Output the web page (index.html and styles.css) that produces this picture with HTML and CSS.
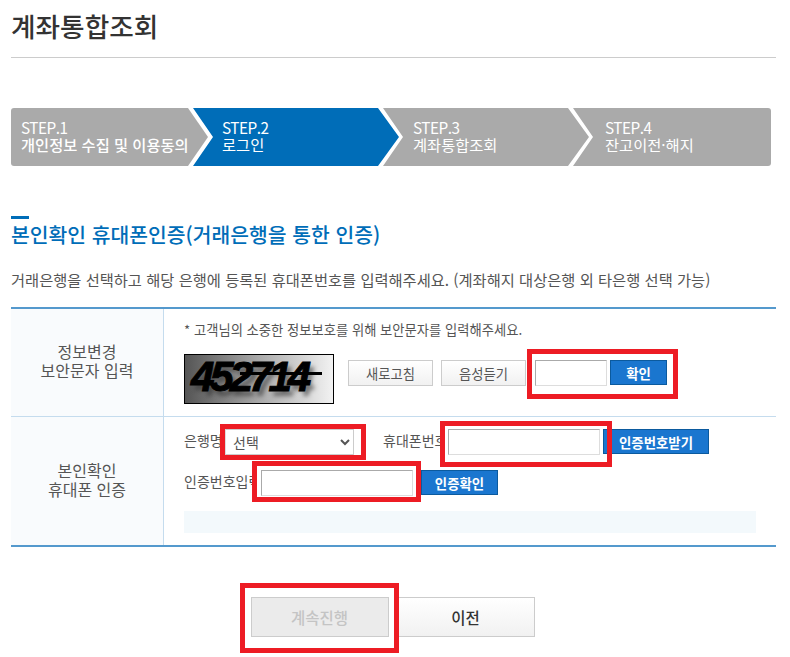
FILE: index.html
```html
<!DOCTYPE html>
<html lang="ko">
<head>
    <meta charset="UTF-8">
    <meta name="viewport" content="width=device-width, initial-scale=1.0">
    <title>계좌통합조회</title>
    <link rel="stylesheet" href="styles.css">
</head>
<body>
    <main class="page">
        <header class="page-head">
            <h1>계좌통합조회</h1>
        </header>

        <ol class="steps">
            <li class="step step-first"><span>STEP.1</span><strong>개인정보 수집 및 이용동의</strong></li>
            <li class="step step-on"><span>STEP.2</span><span>로그인</span></li>
            <li class="step"><span>STEP.3</span><span>계좌통합조회</span></li>
            <li class="step step-last"><span>STEP.4</span><span>잔고이전·해지</span></li>
        </ol>

        <h2 class="section-title">본인확인 휴대폰인증(거래은행을 통한 인증)</h2>
        <p class="section-desc">거래은행을 선택하고 해당 은행에 등록된 휴대폰번호를 입력해주세요. (계좌해지 대상은행 외 타은행 선택 가능)</p>

        <section class="form-table">
            <div class="form-row row-captcha">
                <div class="row-label">정보변경<br>보안문자 입력</div>
                <div class="row-body">
                    <p class="note">* 고객님의 소중한 정보보호를 위해 보안문자를 입력해주세요.</p>
                    <div class="captcha-line">
                        <div class="captcha"><span class="captcha-text">452714</span><i class="captcha-strike"></i></div>
                        <button class="btn-gray btn-refresh">새로고침</button>
                        <button class="btn-gray btn-voice">음성듣기</button>
                        <input type="text" class="field field-captcha">
                        <button class="btn-blue btn-ok">확인</button>
                    </div>
                </div>
            </div>
            <div class="form-row row-phone">
                <div class="row-label">본인확인<br>휴대폰 인증</div>
                <div class="row-body">
                    <div class="phone-line">
                        <label class="lbl lbl-bank">은행명</label>
                        <select class="field-select"><option>선택</option></select>
                        <label class="lbl lbl-phone">휴대폰번호</label>
                        <input type="text" class="field field-phone">
                        <button class="btn-blue btn-request">인증번호받기</button>
                    </div>
                    <div class="phone-line line-code">
                        <label class="lbl lbl-code">인증번호입력</label>
                        <input type="text" class="field field-phone">
                        <button class="btn-blue btn-check">인증확인</button>
                    </div>
                    <div class="notice"></div>
                </div>
            </div>
        </section>

        <div class="actions">
            <button class="btn-big" disabled>계속진행</button>
            <button class="btn-big">이전</button>
        </div>

        <!-- 빨간 표시 -->
        <div class="mark mark-captcha"></div>
        <div class="mark mark-bank"></div>
        <div class="mark mark-phone"></div>
        <div class="mark mark-code"></div>
        <div class="mark mark-next"></div>
    </main>
</body>
</html>
```
FILE: styles.css
```css
:root {
    --primary: #006db8;
    --button: #1a76cf;
    --button-line: #0b5a9e;
    --text: #555555;
    --line: #c5dcee;
    --line-strong: #5499cd;
}

* {
    box-sizing: border-box;
}

html, body {
    margin: 0;
    height: 657px;
    overflow: hidden;
}

body {
    font-family: "Noto Sans CJK KR", "Noto Sans", sans-serif;
    color: var(--text);
    background: #fff;
}

button, input, select {
    font-family: inherit;
    margin: 0;
}

.page {
    position: relative;
    padding: 0 14px 0 11px;
}

.page-head {
    height: 58px;
    border-bottom: 1px solid #cccccc;
}

h1 {
    margin: 0;
    font-size: 26.7px;
    font-weight: 500;
    line-height: 52px;
    color: #333;
}

/* steps */
.steps {
    display: flex;
    list-style: none;
    height: 58px;
    margin: 50px 5px 0 0;
    padding: 0;
    border-radius: 3px;
    overflow: hidden;
}

.step {
    display: flex;
    flex-direction: column;
    justify-content: center;
    width: 206px;
    margin-left: -16px;
    padding: 0 0 2px 30px;
    font-size: 15.3px;
    line-height: 17px;
    color: #fff;
    background: #aaaaaa;
    clip-path: polygon(0 0, calc(100% - 21px) 0, 100% 50%, calc(100% - 21px) 100%, 0 100%, 20px 50%);
}

.step span:first-child {
    letter-spacing: -0.5px;
}

.step strong {
    font-weight: 500;
    white-space: nowrap;
}

.step-first {
    width: 197px;
    margin-left: 0;
    padding-left: 10px;
    clip-path: polygon(0 0, calc(100% - 20px) 0, 100% 50%, calc(100% - 20px) 100%, 0 100%);
}

.step-on {
    margin-left: -15px;
    padding-left: 29px;
    background: var(--primary);
}

.step-last {
    flex: 1;
    padding-left: 32px;
    clip-path: polygon(0 0, 100% 0, 100% 100%, 0 100%, 20px 50%);
}

/* title */
.section-title {
    margin: 50px 0 0;
    padding-top: 4px;
    font-size: 20.4px;
    font-weight: 500;
    line-height: 28px;
    color: var(--primary);
    position: relative;
    white-space: nowrap;
}

.section-title::before {
    content: "";
    position: absolute;
    left: 0;
    top: 0;
    width: 18px;
    height: 3px;
    background: var(--primary);
}

.section-desc {
    margin: 20px 0 0;
    font-size: 15.3px;
    line-height: 22px;
    white-space: nowrap;
}

/* table */
.form-table {
    margin-top: 17px;
    border-top: 2px solid var(--line-strong);
    border-bottom: 2px solid var(--line-strong);
}

.form-row {
    display: flex;
}

.row-captcha {
    height: 108px;
    border-bottom: 1px solid var(--line);
}

.row-phone {
    height: 128px;
}

.row-label {
    display: flex;
    align-items: center;
    justify-content: center;
    width: 153px;
    padding-bottom: 3px;
    border-right: 1px solid var(--line);
    background: #f9fbfd;
    font-size: 16px;
    line-height: 19px;
    text-align: center;
}

.row-body {
    flex: 1;
    padding-left: 20px;
}

.note {
    margin: 12px 0 0;
    font-size: 13.3px;
    line-height: 18px;
    white-space: nowrap;
}

.captcha-line {
    display: flex;
    align-items: flex-start;
    margin-top: 15px;
}

.captcha {
    position: relative;
    width: 150px;
    height: 50px;
    border: 1px solid #000;
    background: linear-gradient(90deg, #555 0%, #aaa 50%, #f2f2f2 100%);
    overflow: hidden;
}

.captcha-text {
    display: block;
    padding-left: 6px;
    font-family: "Liberation Sans", sans-serif;
    font-size: 42px;
    font-weight: 700;
    font-style: italic;
    line-height: 44px;
    letter-spacing: -4px;
    color: #000;
    -webkit-text-stroke: 1px #000;
    text-shadow: 4px 5px 4px rgba(50, 50, 50, 0.6);
}

.captcha-strike {
    position: absolute;
    left: 55px;
    top: 17px;
    width: 82px;
    height: 3px;
    background: #000;
}

.btn-gray {
    width: 85px;
    height: 26px;
    margin-top: 6px;
    padding: 0;
    border: 1px solid #cccccc;
    background: linear-gradient(#ffffff, #f1f1f1);
    font-size: 13.3px;
    color: #555;
}

.btn-refresh {
    margin-left: 14px;
}

.btn-voice {
    margin-left: 8px;
}

.field {
    height: 26px;
    padding: 0 6px;
    border: 1px solid;
    border-color: #aaaaaa #dddddd #dddddd #aaaaaa;
    background: #fff;
}

.field-captcha {
    width: 72px;
    margin: 6px 0 0 9px;
}

.btn-blue {
    height: 25px;
    padding: 0;
    border: 1px solid var(--button-line);
    background: var(--button);
    color: #fff;
    font-size: 13.4px;
    font-weight: 700;
}

.btn-ok {
    width: 57px;
    margin: 6px 0 0 3px;
}

.phone-line {
    display: flex;
    align-items: flex-start;
    margin-top: 12px;
}

.line-code {
    margin-top: 15px;
}

.lbl {
    font-size: 14px;
    line-height: 23px;
    white-space: nowrap;
    overflow: hidden;
}

.lbl-bank {
    width: 41px;
}

.field-select {
    width: 129px;
    height: 26px;
    padding-left: 3px;
    border: 1px solid;
    border-color: #cccccc #cccccc #cccccc #dddddd;
    background: #fff;
    font-size: 14px;
    color: #555;
}

.lbl-phone {
    width: 60px;
    margin: 0 5px 0 29px;
}

.field-phone {
    width: 152px;
}

.lbl-code {
    width: 71px;
    margin-right: 6px;
}

.btn-request {
    width: 106px;
    margin-left: 3px;
}

.btn-check {
    width: 77px;
    margin-left: 8px;
}

.notice {
    width: 572px;
    height: 22px;
    margin-top: 15px;
    background: #f3f9fc;
}

/* bottom buttons */
.actions {
    display: flex;
    gap: 8px;
    justify-content: center;
    margin: 50px 0 0 -2px;
}

.btn-big {
    width: 138px;
    height: 40px;
    padding: 0;
    border: 1px solid #cccccc;
    background: linear-gradient(#ffffff, #f1f1f1);
    font-size: 15.5px;
    font-weight: 500;
    color: #333;
}

.btn-big:disabled {
    background: #ebebeb;
    color: #c4c4c4;
}

/* red marks over the form */
.mark {
    position: absolute;
    border: 5px solid #ed1c24;
}

.mark-captcha {
    left: 527px;
    top: 349px;
    width: 151px;
    height: 50px;
}

.mark-bank {
    left: 220px;
    top: 424px;
    width: 146px;
    height: 36px;
}

.mark-phone {
    left: 440px;
    top: 421px;
    width: 172px;
    height: 46px;
}

.mark-code {
    left: 252px;
    top: 461px;
    width: 169px;
    height: 41px;
}

.mark-next {
    left: 240px;
    top: 583px;
    width: 159px;
    height: 70px;
}
```
